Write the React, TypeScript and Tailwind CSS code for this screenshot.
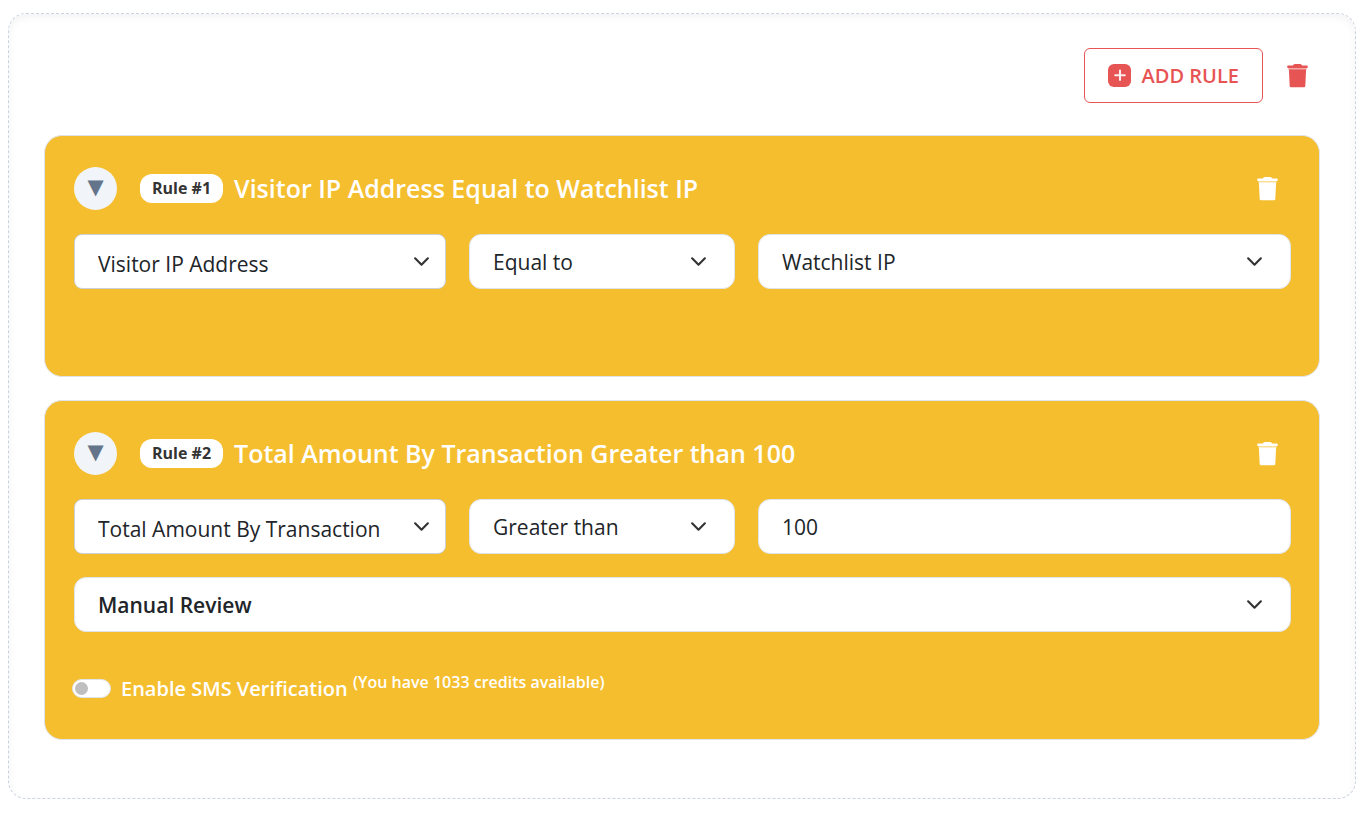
import { useState } from "react";
import type { ReactNode } from "react";

function TrashIcon() {
  return (
    <svg width="21" height="24" viewBox="0 0 21 24" fill="currentColor" aria-hidden="true">
      <path d="M1.2 1.4H5.8Q6.8 0.1 8.2 0.1H12.8Q14.2 0.1 15.2 1.4H19.8Q20.8 1.5 20.8 2.2V3.2Q20.8 4 19.8 4H1.2Q0.2 4 0.2 3.2V2.2Q0.2 1.5 1.2 1.4Z" />
      <path opacity="0.5" d="M1.3 4H19.7L19.5 6H1.5Z" />
      <path d="M1.9 5.6H19.1L18.3 22Q18.2 23.3 16.9 23.3H4.1Q2.8 23.3 2.7 22Z" />
    </svg>
  );
}

function PlusIcon() {
  return (
    <svg width="23" height="23" viewBox="0 0 23 23" aria-hidden="true">
      <rect width="23" height="23" rx="6" fill="#e75454" />
      <path d="M12 6.6V16M7.2 11.2H16.8" stroke="#fff" strokeOpacity="0.9" strokeWidth="2" strokeLinecap="round" />
    </svg>
  );
}

function Chevron({ className }: { className: string }) {
  return (
    <svg
      width="17"
      height="17"
      viewBox="0 0 16 16"
      fill="none"
      stroke="#333"
      strokeWidth="2"
      strokeLinecap="round"
      strokeLinejoin="round"
      aria-hidden="true"
      className={`pointer-events-none col-start-1 row-start-1 self-center justify-self-end ${className}`}
    >
      <path d="m2 5 6 6 6-6" />
    </svg>
  );
}

type PickerProps = {
  label: string;
  options: string[];
  variant?: "field" | "plain" | "strong";
};

function Picker({ label, options, variant = "plain" }: PickerProps) {
  const look = {
    field: "rounded-lg border-[#ccd0d8] pt-1.5",
    plain: "rounded-xl border-[#dfe3ea] pt-0.5",
    strong: "rounded-xl border-[#dfe3ea] pt-0.5 font-semibold",
  }[variant];
  return (
    <div className="grid min-w-0">
      <select
        aria-label={label}
        defaultValue={options[0]}
        className={`col-start-1 row-start-1 h-[55px] w-full appearance-none border bg-white pr-12 pl-[23px] text-[21px] text-[#212529] ${look}`}
      >
        {options.map((option) => (
          <option key={option}>{option}</option>
        ))}
      </select>
      <Chevron className={variant === "field" ? "mr-4" : "mr-7"} />
    </div>
  );
}

function RuleCard({ number, title, children }: { number: number; title: string; children: ReactNode }) {
  return (
    <section className="rounded-[18px] border border-[#dfe3ea] bg-[#f5be2e] pt-[31px] pr-7 pl-[29px]">
      <header className="flex items-center">
        <button
          type="button"
          aria-label={`Collapse rule ${number}`}
          className="flex size-[43px] shrink-0 items-center justify-center rounded-full bg-[#f1f4f9] pb-0.5 font-['DejaVu_Sans',sans-serif] text-[21px] leading-none text-[#64748b]"
        >
          ▼
        </button>
        <span className="ml-[23px] flex h-[29px] items-center rounded-xl bg-white px-3 pb-0.5 text-base font-bold whitespace-nowrap text-[#333]">
          Rule #{number}
        </span>
        <h2 className="ml-[11px] pb-0.5 text-[25px] leading-8 font-semibold text-white">{title}</h2>
        <button type="button" aria-label={`Delete rule ${number}`} className="mr-[13px] ml-auto text-white">
          <TrashIcon />
        </button>
      </header>
      {children}
    </section>
  );
}

const columns = "mt-6 grid grid-cols-[372fr_266fr_533fr] gap-[23px]";

export default function App() {
  const [sms, setSms] = useState(false);
  return (
    <main className="bg-white pt-[13px] pr-[13px] pb-4 pl-2 font-['Open_Sans',sans-serif]">
      <div className="rounded-[18px] border border-dashed border-[#ccd3e0] px-[35px] pt-[34px] pb-[58px] shadow-[inset_0_3px_8px_rgba(0,0,0,0.05)]">
        <div className="mb-8 flex items-center justify-end gap-6 pr-3">
          <button
            type="button"
            className="flex h-[55px] items-center gap-[11px] rounded-md border border-[#e75454] bg-white px-[23px] text-xl font-semibold text-[#e75454]"
          >
            <PlusIcon />
            ADD RULE
          </button>
          <button type="button" aria-label="Delete group" className="text-[#e75454]">
            <TrashIcon />
          </button>
        </div>

        <div className="flex flex-col gap-[23px]">
          <RuleCard number={1} title="Visitor IP Address Equal to Watchlist IP">
            <div className={`${columns} mb-[87px]`}>
              <Picker label="Condition" options={["Visitor IP Address"]} variant="field" />
              <Picker label="Operator" options={["Equal to"]} />
              <Picker label="Value" options={["Watchlist IP"]} />
            </div>
          </RuleCard>

          <RuleCard number={2} title="Total Amount By Transaction Greater than 100">
            <div className={`${columns} mb-[23px]`}>
              <Picker label="Condition" options={["Total Amount By Transaction"]} variant="field" />
              <Picker label="Operator" options={["Greater than"]} />
              <input
                type="text"
                aria-label="Value"
                defaultValue="100"
                className="h-[55px] w-full min-w-0 rounded-xl border border-[#dfe3ea] bg-white px-[23px] text-[21px] text-[#212529]"
              />
            </div>
            <Picker label="Action" options={["Manual Review"]} variant="strong" />
            <div className="-ml-0.5 mt-[42px] mb-9 flex items-center">
              <input
                id="sms"
                type="checkbox"
                role="switch"
                checked={sms}
                onChange={(event) => setSms(event.target.checked)}
                className="flex h-[19px] w-[39px] shrink-0 appearance-none items-center rounded-full border border-[#dfe3ea] bg-white px-0.5 before:size-[13px] before:rounded-full before:bg-[#bfbfbf] checked:justify-end checked:before:bg-[#e75454]"
              />
              <label htmlFor="sms" className="ml-[10px] pt-px text-xl leading-7 font-semibold text-white">
                Enable SMS Verification <sup className="text-base">(You have 1033 credits available)</sup>
              </label>
            </div>
          </RuleCard>
        </div>
      </div>
    </main>
  );
}
